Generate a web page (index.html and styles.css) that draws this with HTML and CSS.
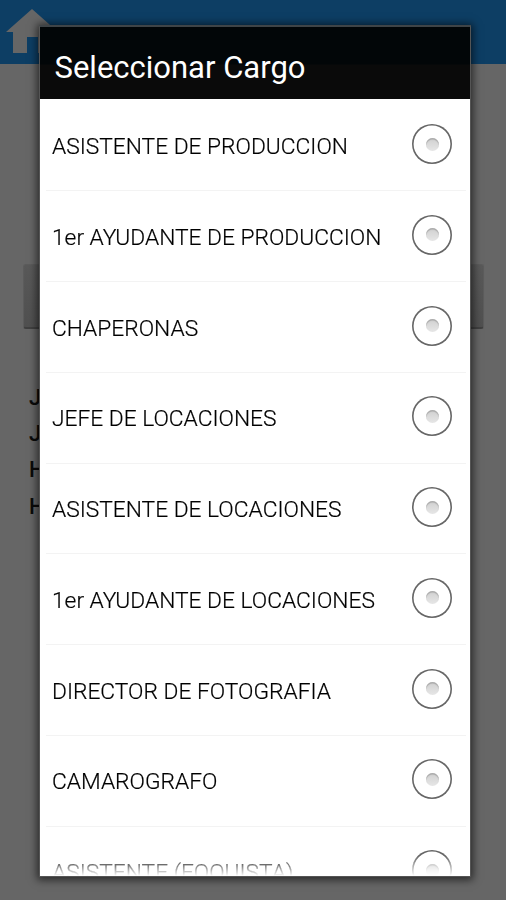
FILE: index.html
```
<!DOCTYPE html>
<html lang="es">
<head>
<meta charset="utf-8">
<title>Seleccionar Cargo</title>
<link rel="stylesheet" href="styles.css">
</head>
<body>
<div class="page">
  <header class="topbar">
    <svg class="home" width="52" height="46" viewBox="0 0 52 46"><path d="M26 0 52 23H45V44H32V28H21V44H7V23H0Z"/></svg>
  </header>
  <div class="page-button"></div>
  <ul class="page-lines"><li>J</li><li>J</li><li>H</li><li>H</li></ul>
</div>
<div class="dialog" role="dialog">
  <h1 class="title">Seleccionar Cargo</h1>
  <ul class="list">
    <li class="row"><span>ASISTENTE DE PRODUCCION</span><i class="radio"></i></li>
    <li class="row"><span>1er AYUDANTE DE PRODUCCION</span><i class="radio"></i></li>
    <li class="row"><span>CHAPERONAS</span><i class="radio"></i></li>
    <li class="row"><span>JEFE DE LOCACIONES</span><i class="radio"></i></li>
    <li class="row"><span>ASISTENTE DE LOCACIONES</span><i class="radio"></i></li>
    <li class="row"><span>1er AYUDANTE DE LOCACIONES</span><i class="radio"></i></li>
    <li class="row"><span>DIRECTOR DE FOTOGRAFIA</span><i class="radio"></i></li>
    <li class="row"><span>CAMAROGRAFO</span><i class="radio"></i></li>
    <li class="row"><span>ASISTENTE (FOQUISTA)</span><i class="radio"></i></li>
  </ul>
</div>
</body>
</html>
```
FILE: styles.css
```
* { box-sizing: border-box; }
body {
  margin: 0;
  height: 900px;
  overflow: hidden;
  background: #666;
  font-family: Roboto, "Liberation Sans", sans-serif;
}
ul { list-style: none; margin: 0; padding: 0; }
.page { height: 900px; }
.topbar {
  height: 64px;
  padding: 9px 0 0 6px;
  background: #0d3e64;
}
.home { display: block; fill: #666; }
.page-button {
  height: 65px;
  margin: 200px 22px 0 23px;
  border-radius: 3px;
  border: 1px solid #5c5c5c;
  border-bottom: 2px solid #404040;
  background: linear-gradient(#595959, #505050);
}
.page-lines {
  margin: 51px 0 0 29px;
  font-size: 22px;
  font-weight: 500;
  line-height: 36.2px;
  color: #0a0a0a;
}
.dialog {
  position: absolute;
  left: 39px;
  top: 25px;
  width: 432px;
  height: 852px;
  display: flex;
  flex-direction: column;
  border: 1px solid #555;
  border-top: 2px solid #3f4447;
  background: #fff;
  box-shadow: 0 1px 8px 2px rgba(0, 0, 0, .6);
}
.title {
  flex: none;
  height: 72px;
  margin: 0;
  padding-left: 14.5px;
  background: linear-gradient(#020608 37px, #0a0a0a 38px);
  color: #fff;
  font-size: 31px;
  font-weight: 400;
  line-height: 81px;
}
.list {
  flex: 1;
  min-height: 0;
  overflow: hidden;
  padding: 1.5px 4px 0 6px;
  -webkit-mask-image: linear-gradient(#000 calc(100% - 20px), transparent);
  mask-image: linear-gradient(#000 calc(100% - 20px), transparent);
}
.row {
  display: flex;
  align-items: center;
  justify-content: space-between;
  height: 90.75px;
  padding: 2.4px 14px 0 6px;
  border-bottom: 1px solid #f3f3f3;
  color: #000;
  font-size: 22.75px;
  font-weight: 300;
  -webkit-text-stroke: .2px #000;
  white-space: nowrap;
}
.radio {
  position: relative;
  top: -2.4px;
  flex: none;
  display: flex;
  align-items: center;
  justify-content: center;
  width: 40px;
  height: 40px;
  border-radius: 50%;
  box-shadow: inset 0 0 0 1.6px #666;
}
.radio::before {
  content: "";
  width: 13px;
  height: 13px;
  border-radius: 50%;
  background: linear-gradient(#d0d0d0, #e6e6e6);
  box-shadow: inset 0 1.5px 1px #aaa;
}
```
